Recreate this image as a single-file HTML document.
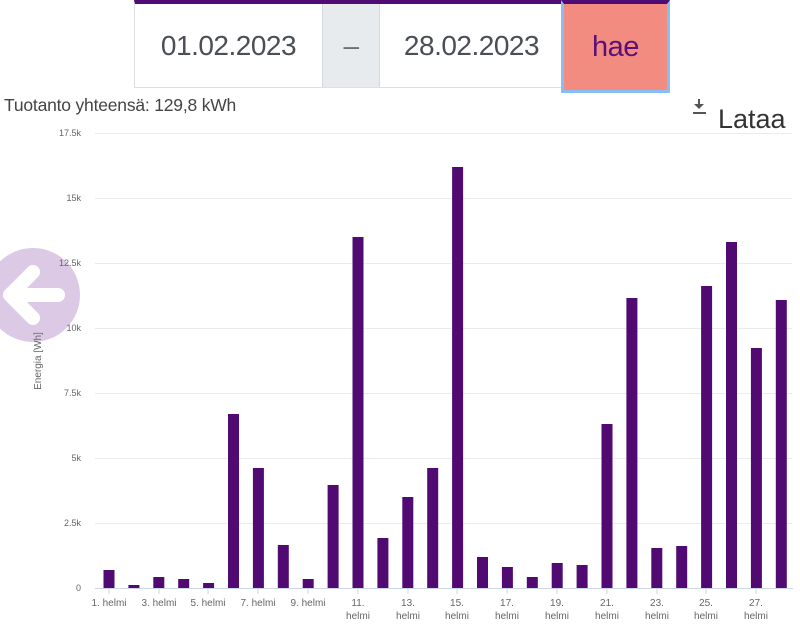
<!DOCTYPE html>
<html><head><meta charset="utf-8"><style>
html,body{margin:0;padding:0;width:800px;height:635px;overflow:hidden;background:#fff;font-family:"Liberation Sans",sans-serif;}
.box{position:absolute;top:0;height:88px;box-sizing:border-box;}
.d{font-size:28px;color:#4a4f55;display:flex;align-items:center;justify-content:center;letter-spacing:-0.5px}
</style></head><body>
<div class="box" style="left:134px;width:534px;border-top:4px solid #4f0c74;border-left:1px solid #dcdfe3;border-bottom:1px solid #dcdfe3"></div>
<div class="box d" style="left:135px;width:187px;top:4px;height:83px">01.02.2023</div>
<div class="box d" style="left:322px;width:58px;top:4px;height:83px;background:#e8ebee;border-left:1px solid #d5d9dd;border-right:1px solid #d5d9dd;color:#6a6f75">–</div>
<div class="box d" style="left:380px;width:183px;top:4px;height:83px">28.02.2023</div>
<div class="box d" style="left:561px;width:109px;height:93px;background:#f28b80;border:3px solid #85bff5;border-top:4px solid #4f0c74;color:#5a1078;font-size:29px">hae</div>
<div style="position:absolute;left:4px;top:95px;font-size:17.5px;color:#444;letter-spacing:-0.2px">Tuotanto yhteensä: 129,8 kWh</div>
<div style="position:absolute;left:718px;top:104px;font-size:27px;color:#333">Lataa</div>
<svg style="position:absolute;left:0;top:0" width="800" height="635">
<g fill="#555"><rect x="698" y="99" width="2" height="8"/><path d="M694 104 L699 109 L704 104Z"/><rect x="693" y="112" width="13" height="2"/></g>
<circle cx="33" cy="295" r="47" fill="#dcc9e6"/>
<path d="M10 295 L58 295 M33 272 L10 295 L33 318" stroke="#fff" stroke-width="14" fill="none" stroke-linecap="round" stroke-linejoin="round"/>
<g stroke="#ebebeb" stroke-width="1">
<line x1="95" y1="133.5" x2="792" y2="133.5"/><line x1="95" y1="198.5" x2="792" y2="198.5"/><line x1="95" y1="263.5" x2="792" y2="263.5"/><line x1="95" y1="328.5" x2="792" y2="328.5"/><line x1="95" y1="393.5" x2="792" y2="393.5"/><line x1="95" y1="458.5" x2="792" y2="458.5"/><line x1="95" y1="523.5" x2="792" y2="523.5"/>
</g>
<g font-size="9" fill="#666" text-anchor="end" font-family="Liberation Sans,sans-serif">
<text x="81" y="136">17.5k</text><text x="81" y="201">15k</text><text x="81" y="266">12.5k</text><text x="81" y="331">10k</text><text x="81" y="396">7.5k</text><text x="81" y="461">5k</text><text x="81" y="526">2.5k</text><text x="81" y="591">0</text>
</g>
<text transform="translate(41,361) rotate(-90)" font-size="10" fill="#666" text-anchor="middle">Energia [Wh]</text>
<g fill="#520a73">
<rect x="103.5" y="570" width="11" height="18"/><rect x="128.4" y="585" width="11" height="3"/><rect x="153.3" y="577" width="11" height="11"/><rect x="178.2" y="579" width="11" height="9"/><rect x="203.1" y="583" width="11" height="5"/><rect x="228" y="414" width="11" height="174"/><rect x="252.9" y="468" width="11" height="120"/><rect x="277.8" y="545" width="11" height="43"/><rect x="302.7" y="579" width="11" height="9"/><rect x="327.6" y="485" width="11" height="103"/><rect x="352.5" y="237" width="11" height="351"/><rect x="377.4" y="538" width="11" height="50"/><rect x="402.3" y="497" width="11" height="91"/><rect x="427.2" y="468" width="11" height="120"/><rect x="452.1" y="167" width="11" height="421"/><rect x="477" y="557" width="11" height="31"/><rect x="501.9" y="567" width="11" height="21"/><rect x="526.8" y="577" width="11" height="11"/><rect x="551.7" y="563" width="11" height="25"/><rect x="576.6" y="565" width="11" height="23"/><rect x="601.5" y="424" width="11" height="164"/><rect x="626.4" y="298" width="11" height="290"/><rect x="651.3" y="548" width="11" height="40"/><rect x="676.2" y="546" width="11" height="42"/><rect x="701.1" y="286" width="11" height="302"/><rect x="726" y="242" width="11" height="346"/><rect x="750.9" y="348" width="11" height="240"/><rect x="775.8" y="300" width="11" height="288"/>
</g>
<line x1="95" y1="588.5" x2="793" y2="588.5" stroke="#ccd6eb"/>
<g stroke="#ccd6eb"><line x1="109" y1="589" x2="109" y2="594"/><line x1="159" y1="589" x2="159" y2="594"/><line x1="208" y1="589" x2="208" y2="594"/><line x1="258" y1="589" x2="258" y2="594"/><line x1="308" y1="589" x2="308" y2="594"/><line x1="358" y1="589" x2="358" y2="594"/><line x1="408" y1="589" x2="408" y2="594"/><line x1="457" y1="589" x2="457" y2="594"/><line x1="507" y1="589" x2="507" y2="594"/><line x1="557" y1="589" x2="557" y2="594"/><line x1="607" y1="589" x2="607" y2="594"/><line x1="657" y1="589" x2="657" y2="594"/><line x1="706" y1="589" x2="706" y2="594"/><line x1="756" y1="589" x2="756" y2="594"/></g>
<g font-size="10" fill="#666" text-anchor="middle">
<text x="109" y="606">1. helmi</text><text x="159" y="606">3. helmi</text><text x="208" y="606">5. helmi</text><text x="258" y="606">7. helmi</text><text x="308" y="606">9. helmi</text>
<text x="358" y="606">11.</text><text x="358" y="619">helmi</text>
<text x="408" y="606">13.</text><text x="408" y="619">helmi</text>
<text x="457" y="606">15.</text><text x="457" y="619">helmi</text>
<text x="507" y="606">17.</text><text x="507" y="619">helmi</text>
<text x="557" y="606">19.</text><text x="557" y="619">helmi</text>
<text x="607" y="606">21.</text><text x="607" y="619">helmi</text>
<text x="657" y="606">23.</text><text x="657" y="619">helmi</text>
<text x="706" y="606">25.</text><text x="706" y="619">helmi</text>
<text x="756" y="606">27.</text><text x="756" y="619">helmi</text>
</g>
</svg>
</body></html>
